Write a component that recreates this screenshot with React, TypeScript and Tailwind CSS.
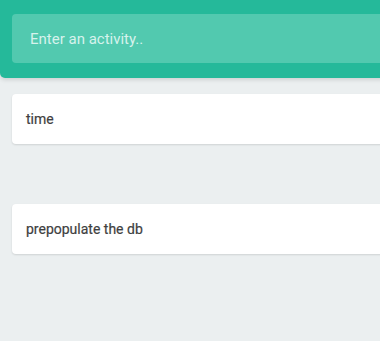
import React from "react";

const items = ["time", "", "prepopulate the db"];

export default function App() {
	return (
		<div className="w-screen h-screen overflow-hidden bg-[#ebeff0]" style={{ fontFamily: "Roboto, 'Liberation Sans', sans-serif" }}>
			<div className="w-[420px]">

				{/* Header with the input */}
				<div className="bg-[#25b99a] rounded-bl-[5px] px-3 pt-[14px] pb-[15px] shadow-[0_2px_4px_rgba(0,0,0,0.12)]">
					<input
						className="w-full h-[49px] rounded-[4px] bg-[#52c9af] px-[18px] text-[15px] text-white placeholder:text-[#d6f2ec] outline-none"
						placeholder="Enter an activity.."
					/>
				</div>

				{/* Activity list */}
				<div className="flex flex-col gap-[10px] pt-4 pl-3">
					{items.map((item, i) => (
						item ? (
							<div key={i} className="h-[50px] flex items-center px-[14px] bg-white rounded-[4px] shadow-[0_1px_2px_rgba(0,0,0,0.12)] text-[14px] text-[#3f3f3f] [-webkit-text-stroke:0.2px_#3f3f3f]">
								{item}
							</div>
						) : (
							<div key={i} className="h-[40px]" />
						)
					))}
				</div>

			</div>
		</div>
	);
}
